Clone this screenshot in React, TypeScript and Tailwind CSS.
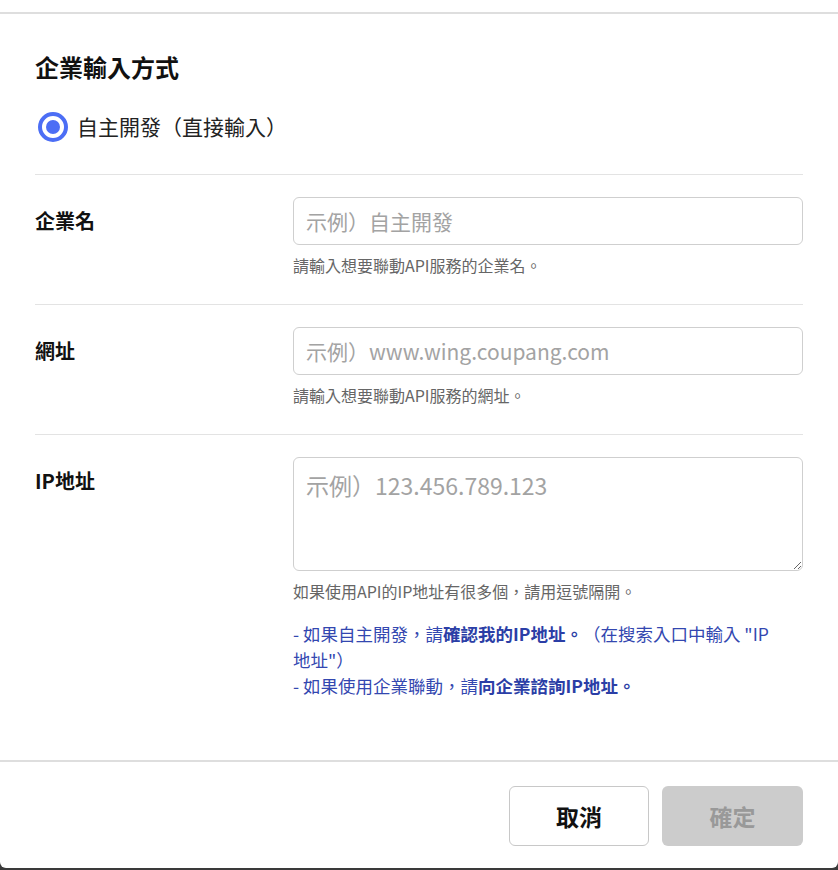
import React from "react";

const font = "font-['Microsoft_JhengHei','Noto_Sans_CJK_TC',sans-serif] [text-spacing-trim:space-all]";

function Row({
  label,
  children,
  last,
}: {
  label: string;
  children: React.ReactNode;
  last?: boolean;
}) {
  return (
    <div className={`flex pt-[22px] pb-[28px] ${last ? "" : "border-b border-[#e3e3e3]"}`}>
      <div className="w-[258px] shrink-0 h-[48px] flex items-center text-[20px] font-bold text-[#111]">
        {label}
      </div>
      <div className="flex-1 flex flex-col">{children}</div>
    </div>
  );
}

export default function App() {
  return (
    <div className={`w-[838px] h-[870px] bg-[#3a3a3a] ${font}`}>
      <div className="h-[868px] bg-white rounded-b-[6px] flex flex-col">
        <div className="h-[12px] shrink-0" />
        <div className="h-[2px] bg-[#dedede] shrink-0" />
        <div className="flex-1 px-[35px]">
          <div className="mt-[37px] text-[24px] leading-[32px] font-bold text-[#111]">企業輸入方式</div>
          <div className="mt-[29px] flex items-center h-[30px]">
            <div className="w-[30px] h-[30px] rounded-full border-[4px] border-[#4c6ef5] flex items-center justify-center ml-[3px]">
              <div className="w-[14px] h-[14px] rounded-full bg-[#4c6ef5]" />
            </div>
            <span className="ml-[9px] text-[21px] text-[#222]">自主開發（直接輸入）</span>
          </div>
          <div className="mt-[32px] border-b border-[#e3e3e3]" />
          <Row label="企業名">
            <input
              className="h-[48px] w-full rounded-[6px] border border-[#cfcfcf] px-[12px] text-[21px] outline-none placeholder:text-[#a3a3a3]"
              placeholder="示例）自主開發"
            />
            <div className="mt-[9px] text-[16px] leading-[22px] text-[#666]">請輸入想要聯動API服務的企業名。</div>
          </Row>
          <Row label="網址">
            <input
              className="h-[48px] w-full rounded-[6px] border border-[#cfcfcf] px-[12px] text-[21px] outline-none placeholder:text-[#a3a3a3]"
              placeholder="示例）www.wing.coupang.com"
            />
            <div className="mt-[9px] text-[16px] leading-[22px] text-[#666]">請輸入想要聯動API服務的網址。</div>
          </Row>
          <Row label="IP地址" last>
            <textarea
              className="h-[114px] w-full rounded-[6px] border border-[#cfcfcf] px-[12px] py-[12px] text-[23px] leading-[30px] outline-none placeholder:text-[#a3a3a3]"
              placeholder="示例）123.456.789.123"
            />
            <div className="mt-[9px] text-[16px] leading-[22px] text-[#666]">如果使用API的IP地址有很多個，請用逗號隔開。</div>
            <div className="mt-[19px] text-[17.5px] leading-[26px] text-[#3347b0] whitespace-nowrap">
              <div>
                - 如果自主開發，請<b className="font-bold text-[#2b3ea6]">確認我的IP地址。</b>（在搜索入口中輸入 "IP
                <br />
                地址"）
              </div>
              <div>
                - 如果使用企業聯動，請<b className="font-bold text-[#2b3ea6]">向企業諮詢IP地址。</b>
              </div>
            </div>
          </Row>
        </div>
        <div className="h-[2px] bg-[#dedede] shrink-0" />
        <div className="h-[106px] shrink-0 flex items-start justify-end gap-[13px] pt-[24px] pr-[35px]">
          <button className="w-[140px] h-[60px] rounded-[6px] border border-[#c8c8c8] bg-white text-[23px] font-bold text-[#111]">
            取消
          </button>
          <button className="w-[141px] h-[60px] rounded-[6px] bg-[#cccccc] text-[23px] font-bold text-[#999]">
            確定
          </button>
        </div>
      </div>
    </div>
  );
}
